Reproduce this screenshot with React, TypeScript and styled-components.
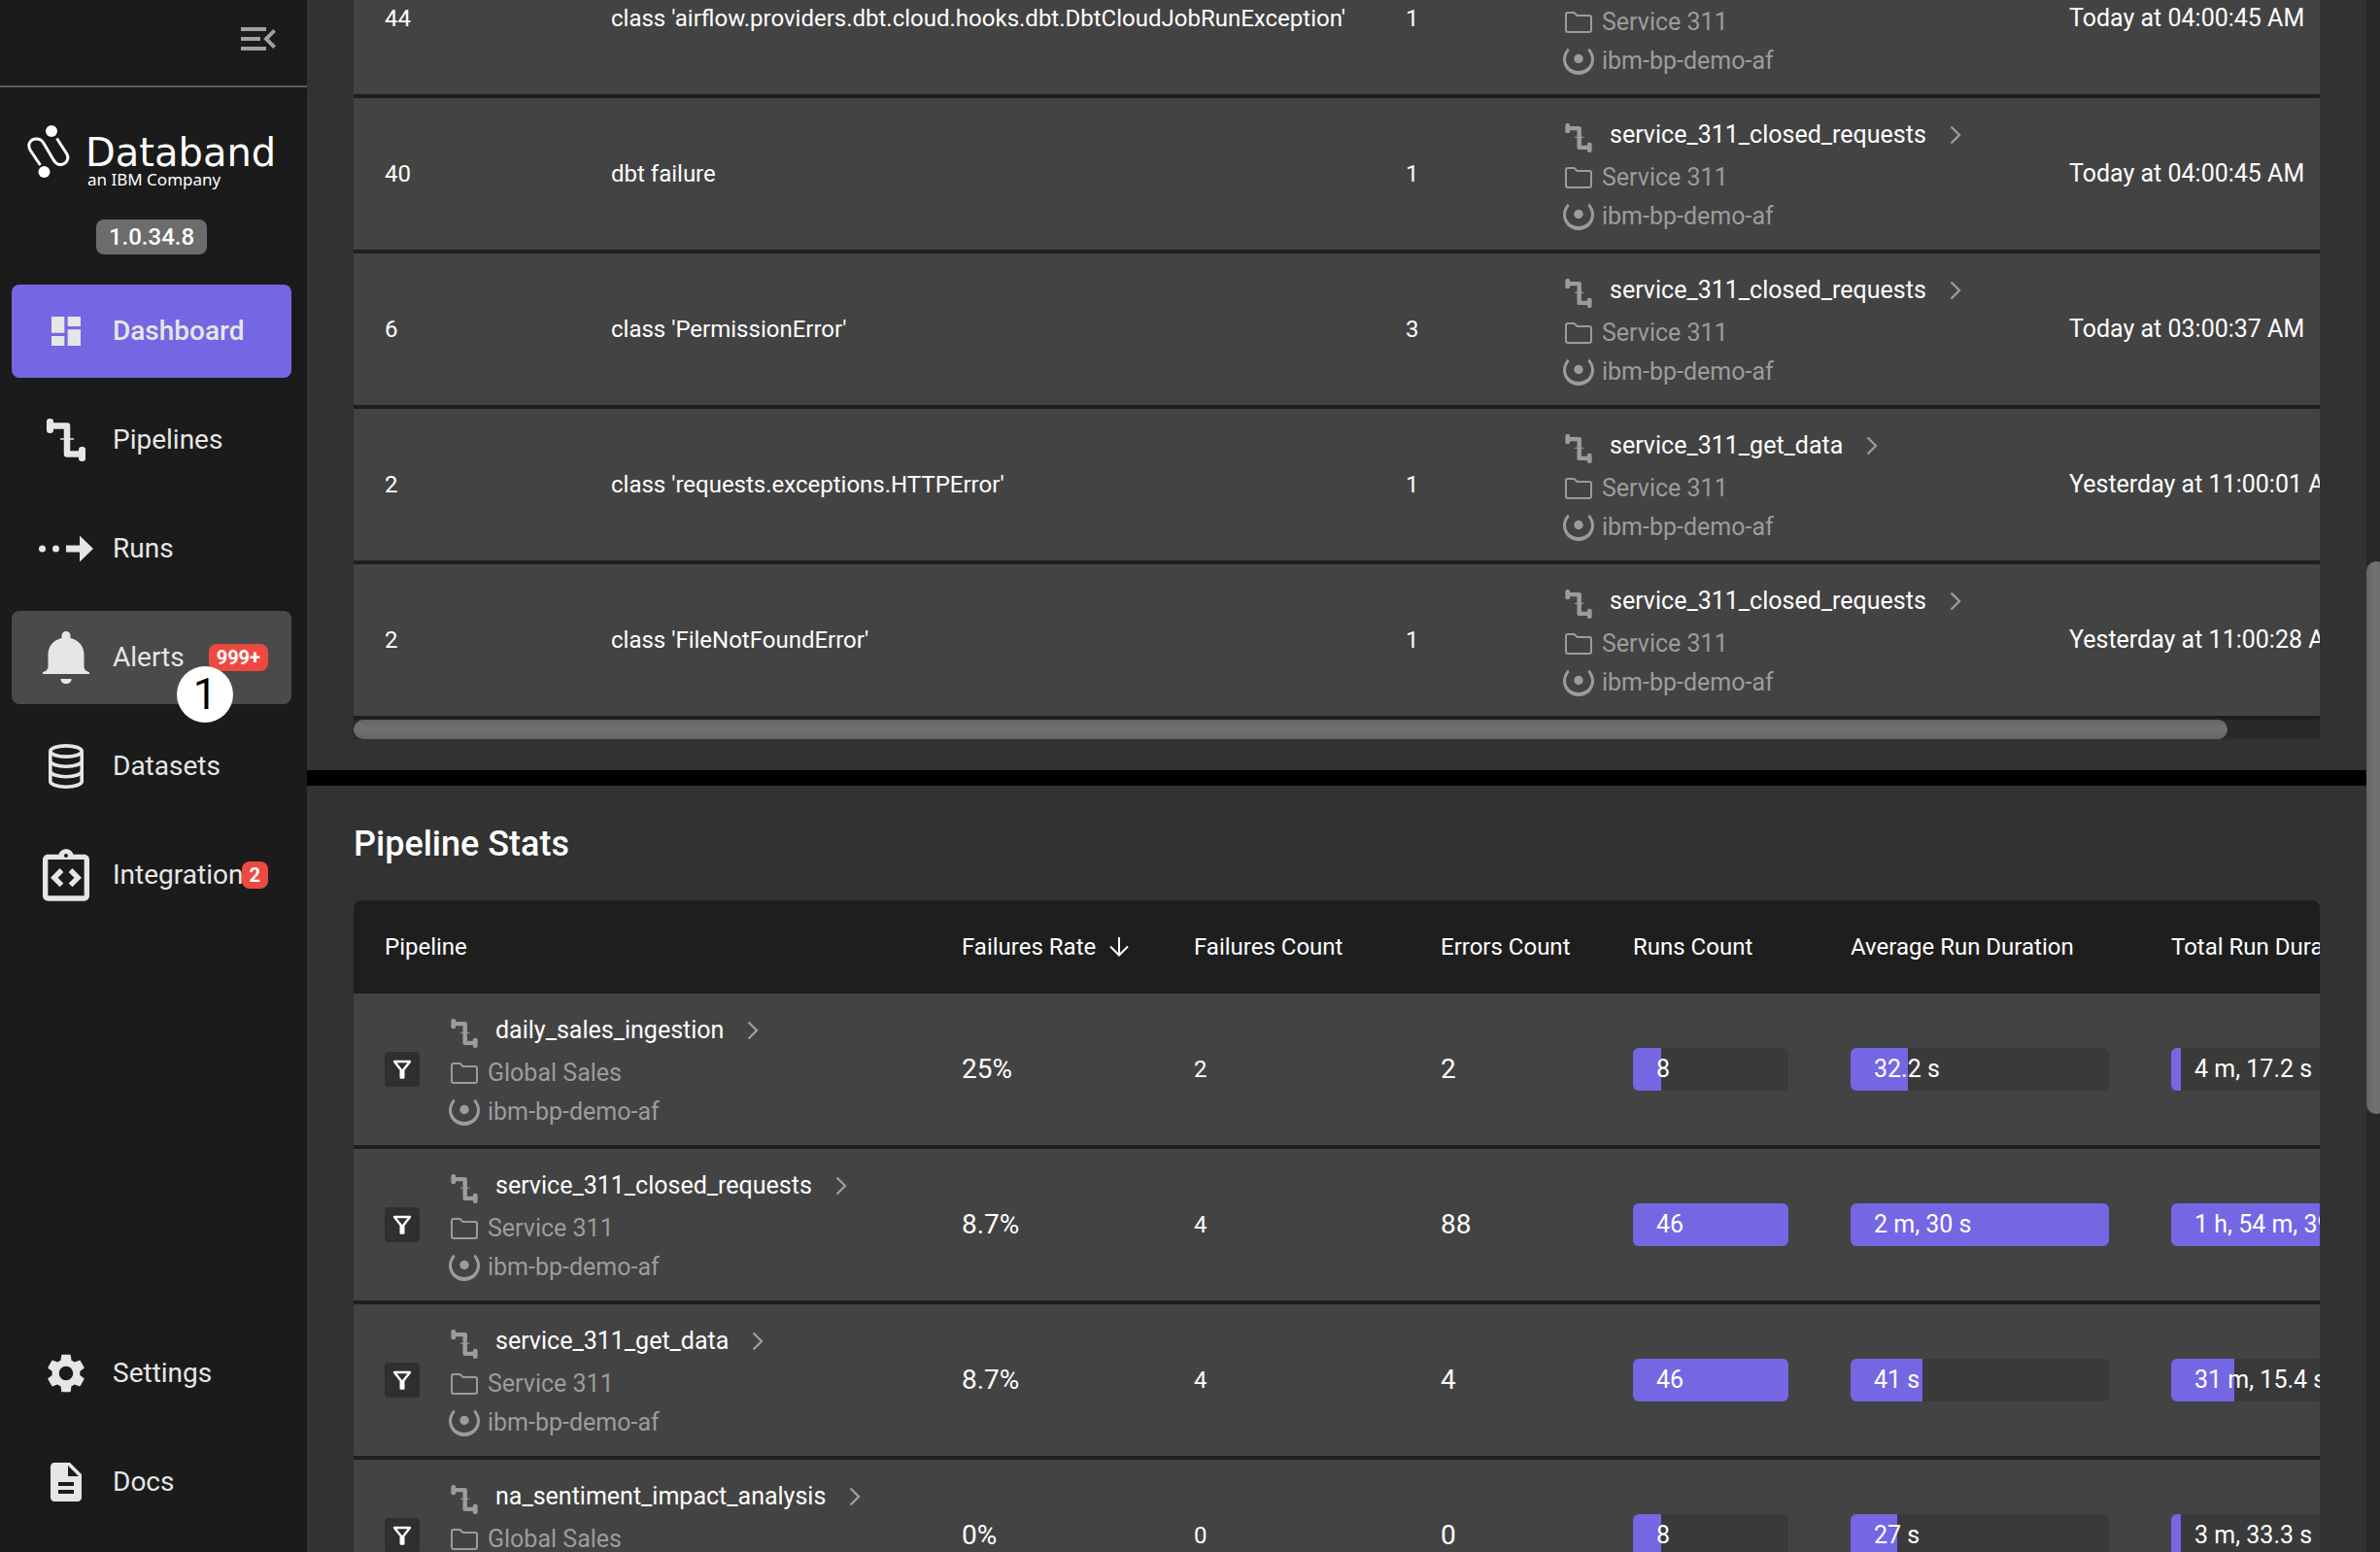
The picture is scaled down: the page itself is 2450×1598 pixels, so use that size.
import React from "react";
import styled, { createGlobalStyle, css } from "styled-components";
import {
  MdDashboard,
  MdDescription,
  MdMenuOpen,
  MdOutlineIntegrationInstructions,
  MdSettings,
} from "react-icons/md";

const color = {
  sidebar: "#1b1b1b",
  page: "#323232",
  row: "#434343",
  line: "#1e1e1e",
  accent: "#7566e3",
  danger: "#ec4a41",
  muted: "#9c9c9c",
  text: "#ffffff",
  nav: "#e6e6e6",
};

const GlobalStyle = createGlobalStyle`
  *, *::before, *::after { box-sizing: border-box; }
  body {
    margin: 0;
    background: ${color.page};
    color: ${color.text};
    font-family: Roboto, "Liberation Sans", sans-serif;
    font-size: 24px;
    line-height: 32px;
    overflow: hidden;
  }
  svg { display: block; flex: none; }
  button { font: inherit; color: inherit; border: 0; padding: 0; cursor: pointer; }
  a { color: inherit; text-decoration: none; }
`;

/* ---------- icons ---------- */

type IconProps = { width: number; height: number };

const PipelineIcon = ({ width, height }: IconProps) => (
  <svg width={width} height={height} viewBox="0 0 40 44" fill="currentColor" aria-hidden="true">
    <rect x="0" y="0" width="7" height="15" rx="3" />
    <rect x="33" y="29" width="7" height="15" rx="3" />
    <path d="M5 7.500H21V36.500H35" fill="none" stroke="currentColor" strokeWidth="6.500" strokeLinejoin="round" />
    <path d="M14 21H28" stroke="currentColor" strokeWidth="1.500" />
  </svg>
);

const RunsIcon = () => (
  <svg width="56" height="28" viewBox="0 0 56 28" fill="currentColor" aria-hidden="true">
    <circle cx="3.500" cy="14" r="3.500" />
    <circle cx="17.500" cy="14" r="3.500" />
    <path d="M28 10.500H42V0.500L56 14L42 27.500V17.500H28Z" />
  </svg>
);

const BellIcon = () => (
  <svg width="48" height="54" viewBox="0 0 48 54" fill="currentColor" aria-hidden="true">
    <path d="M24 0a4.500 4.500 0 0 1 4.500 4.500V7C37 8.800 42.500 15.500 42.500 24V36C42.500 39.500 45 41.500 48 42V44H0V42C3 41.500 5.500 39.500 5.500 36V24C5.500 15.500 11 8.800 19.500 7V4.500A4.500 4.500 0 0 1 24 0Z" />
    <path d="M18.500 49H29.500C29.500 52.300 27.300 54 24 54S18.500 52.300 18.500 49Z" />
  </svg>
);

const DatabaseIcon = () => (
  <svg width="36" height="46" viewBox="0 0 36 46" fill="none" stroke="currentColor" strokeWidth="3.600" aria-hidden="true">
    <ellipse cx="18" cy="7.500" rx="16.200" ry="5.600" />
    <path d="M1.800 7.500V38.500C1.800 41.600 9 44.200 18 44.200S34.200 41.600 34.200 38.500V7.500" />
    <path d="M1.800 17.500C1.800 20.600 9 23.200 18 23.200S34.200 20.600 34.200 17.500" />
    <path d="M1.800 28C1.800 31.100 9 33.700 18 33.700S34.200 31.100 34.200 28" />
  </svg>
);

const LogoMark = () => (
  <svg width="44" height="54" viewBox="0 0 44 54" aria-hidden="true">
    <circle cx="25" cy="6" r="6" fill="#fff" />
    <circle cx="17.500" cy="48" r="6" fill="#fff" />
    <path
      d="M13.500 41L3.400 26C-0.500 19.500 3.500 14 9.500 14C13 14 15 15.500 16.500 17.800L27 35.500C29 38.800 31 40.500 34 40.500C40 40.500 44 34.500 40.500 29L30.500 13.500"
      fill="none"
      stroke="#fff"
      strokeWidth="3"
    />
  </svg>
);

const FolderIcon = () => (
  <svg width="28" height="22" viewBox="0 0 28 22" fill="none" stroke="currentColor" strokeWidth="2" strokeLinejoin="round" aria-hidden="true">
    <path d="M1 3C1 2 2 1 3 1H9.500L12.500 4H25C26 4 27 5 27 6V19C27 20 26 21 25 21H3C2 21 1 20 1 19Z" />
  </svg>
);

const SourceIcon = () => (
  <svg width="32" height="28" viewBox="0 0 32 28" fill="currentColor" aria-hidden="true">
    <circle cx="16" cy="11.500" r="4.700" />
    <path d="M5 0.500C2 3.500 0 7.500 0 12C0 21 7 28 16 28S32 21 32 12C32 7.500 30 3.500 27 0.500L25.500 3C27.500 5.500 29 8.500 29 12C29 19 23 24 16 24S3 19 3 12C3 8.500 4.500 5.500 6.500 3Z" />
  </svg>
);

const ChevronIcon = () => (
  <svg width="12" height="20" viewBox="0 0 12 20" fill="none" stroke="currentColor" strokeWidth="2.400" aria-hidden="true">
    <path d="M1.500 1.500L10 10L1.500 18.500" />
  </svg>
);

const FunnelIcon = () => (
  <svg width="20" height="20" viewBox="0 0 20 20" fill="none" stroke="currentColor" strokeWidth="2.400" strokeLinejoin="round" aria-hidden="true">
    <path d="M2 2H18L11.300 10.500V18.500H8.700V10.500Z" />
    <path d="M10 10V19" strokeWidth="3" />
  </svg>
);

const SortDownIcon = () => (
  <svg width="20" height="20" viewBox="0 0 20 20" fill="none" stroke="currentColor" strokeWidth="2" aria-hidden="true">
    <path d="M10 0V18M1 9.500L10 18.500L19 9.500" />
  </svg>
);

/* ---------- sidebar ---------- */

const Shell = styled.div`
  display: flex;
  height: 100vh;
`;

const Sidebar = styled.aside`
  flex: none;
  width: 316px;
  display: flex;
  flex-direction: column;
  background: ${color.sidebar};
`;

const CollapseBar = styled.div`
  display: flex;
  justify-content: flex-end;
  padding: 16px 26px 24px;
  border-bottom: 2px solid #5c5c5c;
`;

const CollapseButton = styled.button`
  background: none;
  color: #a0a0a0;
`;

const Brand = styled.div`
  display: flex;
  gap: 16px;
  padding: 39px 28px 0;
`;

const BrandName = styled.div`
  padding-top: 8px;
  font-family: "DejaVu Sans", sans-serif;
  font-size: 40px;
  line-height: 40px;
`;

const BrandTag = styled.div`
  padding-left: 2px;
  font-family: "Noto Sans", sans-serif;
  font-size: 17px;
  line-height: 16px;
`;

const Version = styled.div`
  align-self: center;
  margin: 33px 4px 31px 0;
  padding: 0 13px;
  border-radius: 8px;
  background: #6c6c6c;
  font-weight: 500;
  line-height: 36px;
`;

const Nav = styled.nav`
  flex: 1;
  display: flex;
  flex-direction: column;
  gap: 16px;
  padding: 0 16px 24px 12px;
`;

const NavLink = styled.a<{ $tone?: "active" | "hover"; $bottom?: boolean }>`
  position: relative;
  display: flex;
  align-items: center;
  height: 96px;
  padding: 0 24px;
  border-radius: 8px;
  color: ${color.nav};
  font-size: 28px;
  ${(p) => p.$bottom && css`margin-top: auto;`}
  ${(p) => p.$tone === "active" && css`background: ${color.accent}; font-weight: 500;`}
  ${(p) => p.$tone === "hover" && css`background: #4a4a4a;`}
`;

const NavIcon = styled.span`
  flex: none;
  width: 64px;
  margin-right: 16px;
  display: flex;
  justify-content: center;
`;

const NavLabel = styled.span`
  min-width: 0;
`;

const NavBadge = styled.span`
  flex: none;
  margin-left: auto;
  padding: 0 8px;
  border-radius: 8px;
  background: ${color.danger};
  color: #fff;
  font-size: 20px;
  font-weight: 700;
  line-height: 28px;
`;

const StepMarker = styled.span`
  position: absolute;
  left: 170px;
  top: 57px;
  width: 58px;
  height: 58px;
  border-radius: 50%;
  background: #fff;
  color: #000;
  font-size: 44px;
  line-height: 58px;
  text-align: center;
`;

/* ---------- content ---------- */

const Main = styled.main`
  flex: 1;
  min-width: 0;
  overflow: hidden;
`;

/* The page is scrolled part-way into the first table. */
const Scrolled = styled.div`
  margin-top: -59px;
`;

const Section = styled.section`
  padding: 0 48px 32px;
  & + & {
    border-top: 16px solid #000;
    padding-top: 40px;
  }
`;

const Heading = styled.h2`
  margin: 0 0 38px;
  font-size: 36px;
  font-weight: 500;
  line-height: 40px;
`;

const TableFrame = styled.div`
  overflow: hidden;
  border-radius: 8px 8px 0 0;
`;

const Table = styled.table<{ $width: string }>`
  width: ${(p) => p.$width};
  min-width: 2080px;
  table-layout: fixed;
  border-collapse: separate;
  border-spacing: 0;
`;

const Th = styled.th`
  height: 96px;
  padding: 0 32px;
  background: ${color.line};
  font-weight: 400;
  text-align: left;
  white-space: nowrap;
`;

const SortButton = styled.button`
  display: flex;
  align-items: center;
  gap: 14px;
  background: none;
`;

const cellSize = { normal: 24, roomy: 25, large: 28 };

const Td = styled.td<{ $size?: keyof typeof cellSize }>`
  height: 160px;
  padding: 0 32px;
  background: ${color.row};
  border-bottom: 4px solid ${color.line};
  white-space: nowrap;
  font-size: ${(p) => cellSize[p.$size ?? "normal"]}px;
`;

const PipelineCell = styled.div`
  display: flex;
  align-items: center;
  gap: 30px;
`;

const FilterButton = styled.button`
  display: grid;
  place-items: center;
  width: 36px;
  height: 36px;
  border-radius: 4px;
  background: #2f2f2f;
`;

const Info = styled.div`
  display: grid;
  color: ${color.muted};
`;

const InfoLine = styled.div<{ $name?: boolean }>`
  display: flex;
  align-items: center;
  gap: ${(p) => (p.$name ? 16 : 8)}px;
  height: ${(p) => (p.$name ? 48 : 40)}px;
`;

const InfoIcon = styled.span<{ $low?: boolean }>`
  flex: none;
  width: 32px;
  padding-top: ${(p) => (p.$low ? 6 : 0)}px;
  display: flex;
  justify-content: center;
`;

const InfoLink = styled.a`
  display: flex;
  align-items: center;
  gap: 24px;
`;

const InfoName = styled.span`
  color: ${color.text};
`;

const Meter = styled.div`
  display: grid;
  height: 44px;
  border-radius: 6px;
  background: #3a3a3a;
  overflow: hidden;
  align-items: center;
`;

const MeterFill = styled.div`
  grid-area: 1 / 1;
  height: 100%;
  background: ${color.accent};
`;

const MeterLabel = styled.span`
  grid-area: 1 / 1;
  padding-left: 24px;
`;

const HorizontalTrack = styled.div`
  height: 20px;
  background: #292929;
`;

const HorizontalThumb = styled.div`
  width: 95.3%;
  height: 100%;
  border-radius: 10px;
  background: linear-gradient(#646464, #707070 40%, #707070 60%, #646464);
`;

const VerticalTrack = styled.div`
  flex: none;
  width: 14px;
  height: 100vh;
  padding-top: 36.2vh;
  overflow: hidden;
  background: #282828;
`;

const VerticalThumb = styled.div`
  width: 20px;
  height: 35.6vh;
  border-radius: 10px;
  background: linear-gradient(90deg, #646464, #707070 40%, #707070 60%, #646464);
`;

type PipelineInfo = { name: string; project: string };

const SOURCE = "ibm-bp-demo-af";

const PipelineDetails = ({ name, project }: PipelineInfo) => (
  <Info>
    <InfoLine $name>
      <InfoIcon $low>
        <PipelineIcon width={28} height={30} />
      </InfoIcon>
      <InfoLink href="#pipeline">
        <InfoName>{name}</InfoName>
        <ChevronIcon />
      </InfoLink>
    </InfoLine>
    <InfoLine>
      <InfoIcon>
        <FolderIcon />
      </InfoIcon>
      {project}
    </InfoLine>
    <InfoLine>
      <InfoIcon>
        <SourceIcon />
      </InfoIcon>
      {SOURCE}
    </InfoLine>
  </Info>
);

const Bar = ({ label, share }: { label: string; share: number }) => (
  <Meter>
    <MeterFill style={{ width: `${share}%` }} />
    <MeterLabel>{label}</MeterLabel>
  </Meter>
);

const errors = [
  { total: 44, message: "class 'airflow.providers.dbt.cloud.hooks.dbt.DbtCloudJobRunException'", pipelines: 1, name: "service_311_closed_requests", seen: "Today at 04:00:45 AM" },
  { total: 40, message: "dbt failure", pipelines: 1, name: "service_311_closed_requests", seen: "Today at 04:00:45 AM" },
  { total: 6, message: "class 'PermissionError'", pipelines: 3, name: "service_311_closed_requests", seen: "Today at 03:00:37 AM" },
  { total: 2, message: "class 'requests.exceptions.HTTPError'", pipelines: 1, name: "service_311_get_data", seen: "Yesterday at 11:00:01 AM" },
  { total: 2, message: "class 'FileNotFoundError'", pipelines: 1, name: "service_311_closed_requests", seen: "Yesterday at 11:00:28 AM" },
];

const stats = [
  { name: "daily_sales_ingestion", project: "Global Sales", rate: "25%", failures: 2, errors: 2, runs: ["8", 18], average: ["32.2 s", 22], total: ["4 m, 17.2 s", 4] },
  { name: "service_311_closed_requests", project: "Service 311", rate: "8.7%", failures: 4, errors: 88, runs: ["46", 100], average: ["2 m, 30 s", 100], total: ["1 h, 54 m, 39 s", 100] },
  { name: "service_311_get_data", project: "Service 311", rate: "8.7%", failures: 4, errors: 4, runs: ["46", 100], average: ["41 s", 28], total: ["31 m, 15.4 s", 27] },
  { name: "na_sentiment_impact_analysis", project: "Global Sales", rate: "0%", failures: 0, errors: 0, runs: ["8", 18], average: ["27 s", 18], total: ["3 m, 33.3 s", 4] },
] as {
  name: string; project: string; rate: string; failures: number; errors: number;
  runs: [string, number]; average: [string, number]; total: [string, number];
}[];

const Col = styled.col<{ $w?: number }>`
  ${(p) => p.$w && css`width: ${p.$w}px;`}
`;

export default function App() {
  return (
    <>
      <GlobalStyle />
      <Shell>
        <Sidebar>
          <CollapseBar>
            <CollapseButton type="button" aria-label="Collapse menu">
              <MdMenuOpen size={48} />
            </CollapseButton>
          </CollapseBar>
          <Brand>
            <LogoMark />
            <div>
              <BrandName>Databand</BrandName>
              <BrandTag>an IBM Company</BrandTag>
            </div>
          </Brand>
          <Version>1.0.34.8</Version>
          <Nav>
            <NavLink href="#dashboard" $tone="active">
              <NavIcon><MdDashboard size={40} /></NavIcon>
              <NavLabel>Dashboard</NavLabel>
            </NavLink>
            <NavLink href="#pipelines">
              <NavIcon><PipelineIcon width={40} height={44} /></NavIcon>
              <NavLabel>Pipelines</NavLabel>
            </NavLink>
            <NavLink href="#runs">
              <NavIcon><RunsIcon /></NavIcon>
              <NavLabel>Runs</NavLabel>
            </NavLink>
            <NavLink href="#alerts" $tone="hover">
              <NavIcon><BellIcon /></NavIcon>
              <NavLabel>Alerts</NavLabel>
              <NavBadge>999+</NavBadge>
              <StepMarker>1</StepMarker>
            </NavLink>
            <NavLink href="#datasets">
              <NavIcon><DatabaseIcon /></NavIcon>
              <NavLabel>Datasets</NavLabel>
            </NavLink>
            <NavLink href="#integration">
              <NavIcon><MdOutlineIntegrationInstructions size={64} viewBox="0 -1 24 24" /></NavIcon>
              <NavLabel>Integration</NavLabel>
              <NavBadge>2</NavBadge>
            </NavLink>
            <NavLink href="#settings" $bottom>
              <NavIcon><MdSettings size={48} /></NavIcon>
              <NavLabel>Settings</NavLabel>
            </NavLink>
            <NavLink href="#docs">
              <NavIcon><MdDescription size={48} /></NavIcon>
              <NavLabel>Docs</NavLabel>
            </NavLink>
          </Nav>
        </Sidebar>

        <Main>
          <Scrolled>
            <Section>
              <TableFrame>
                <Table $width="105%">
                  <colgroup>
                    <Col $w={233} />
                    <Col $w={818} />
                    <Col $w={162} />
                    <Col $w={521} />
                    <Col />
                  </colgroup>
                  <tbody>
                    {errors.map((row, i) => (
                      <tr key={i}>
                        <Td>{row.total}</Td>
                        <Td>{row.message}</Td>
                        <Td>{row.pipelines}</Td>
                        <Td $size="roomy"><PipelineDetails name={row.name} project="Service 311" /></Td>
                        <Td $size="roomy">{row.seen}</Td>
                      </tr>
                    ))}
                  </tbody>
                </Table>
              </TableFrame>
              <HorizontalTrack>
                <HorizontalThumb />
              </HorizontalTrack>
            </Section>

            <Section>
              <Heading>Pipeline Stats</Heading>
              <TableFrame>
                <Table $width="106%">
                  <colgroup>
                    <Col $w={594} />
                    <Col $w={239} />
                    <Col $w={254} />
                    <Col $w={198} />
                    <Col $w={224} />
                    <Col $w={330} />
                    <Col />
                  </colgroup>
                  <thead>
                    <tr>
                      <Th>Pipeline</Th>
                      <Th>
                        <SortButton type="button">
                          Failures Rate
                          <SortDownIcon />
                        </SortButton>
                      </Th>
                      <Th>Failures Count</Th>
                      <Th>Errors Count</Th>
                      <Th>Runs Count</Th>
                      <Th>Average Run Duration</Th>
                      <Th>Total Run Duration</Th>
                    </tr>
                  </thead>
                  <tbody>
                    {stats.map((row) => (
                      <tr key={row.name}>
                        <Td $size="roomy">
                          <PipelineCell>
                            <FilterButton type="button" aria-label={`Filter by ${row.name}`}>
                              <FunnelIcon />
                            </FilterButton>
                            <PipelineDetails name={row.name} project={row.project} />
                          </PipelineCell>
                        </Td>
                        <Td $size="large">{row.rate}</Td>
                        <Td>{row.failures}</Td>
                        <Td $size="large">{row.errors}</Td>
                        <Td $size="roomy"><Bar label={row.runs[0]} share={row.runs[1]} /></Td>
                        <Td $size="roomy"><Bar label={row.average[0]} share={row.average[1]} /></Td>
                        <Td $size="roomy"><Bar label={row.total[0]} share={row.total[1]} /></Td>
                      </tr>
                    ))}
                  </tbody>
                </Table>
              </TableFrame>
            </Section>
          </Scrolled>
        </Main>
        <VerticalTrack>
          <VerticalThumb />
        </VerticalTrack>
      </Shell>
    </>
  );
}
